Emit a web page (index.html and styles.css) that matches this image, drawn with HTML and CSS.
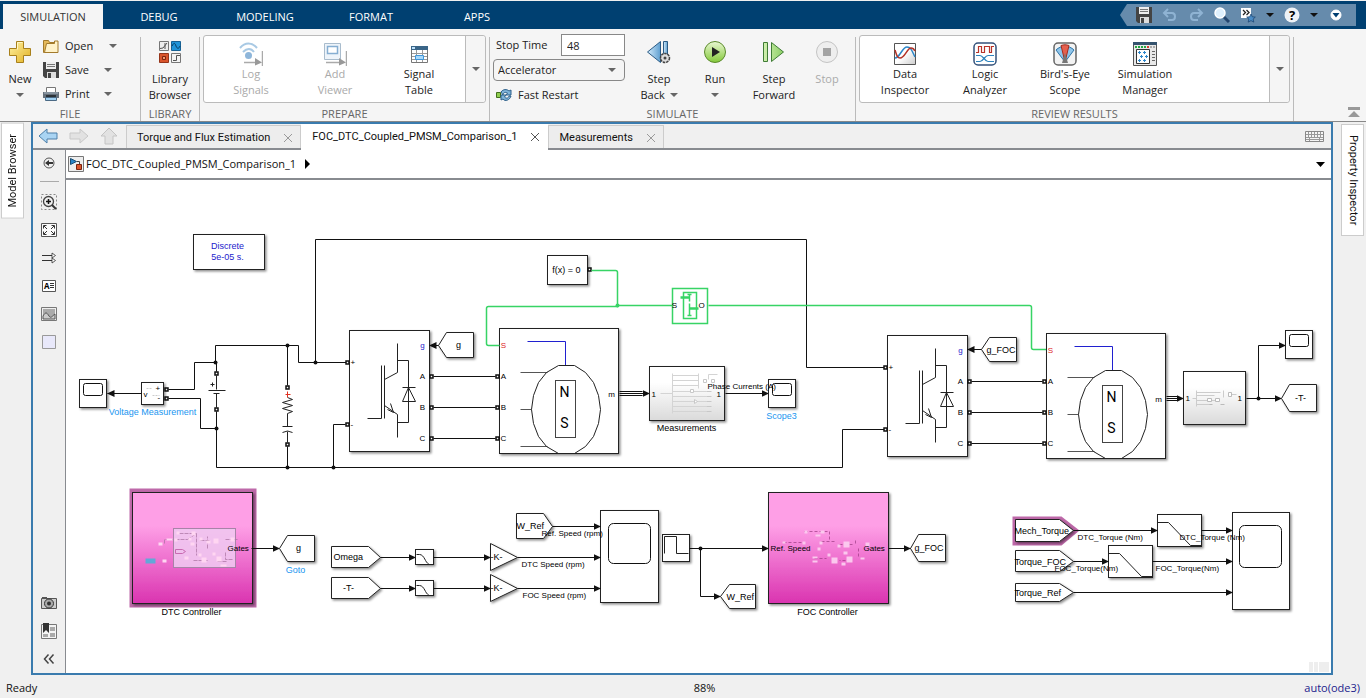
FILE: index.html
```html
<!DOCTYPE html>
<html lang="en">
<head>
    <meta charset="UTF-8">
    <meta name="viewport" content="width=device-width, initial-scale=1.0">
    <title>FOC_DTC_Coupled_PMSM_Comparison_1 - Simulink</title>
    <link rel="stylesheet" href="styles.css">
</head>
<body>
    <!-- Toolstrip tabs -->
    <header class="tabbar">
        <nav class="tabs">
            <button class="tab active">SIMULATION</button>
            <button class="tab">DEBUG</button>
            <button class="tab">MODELING</button>
            <button class="tab">FORMAT</button>
            <button class="tab">APPS</button>
        </nav>
        <div class="quick-access">
            <button class="quick" aria-label="Save"><svg width="16" height="16"><path d="M0 0h16v16H2l-2-2z" fill="#444"/><path d="M3 0h10v7H3z" fill="#eee"/><path d="M4 2.500h8M4 4.500h8" stroke="#777"/><path d="M4 10h9v6H4z" fill="#ddd"/><path d="M5 11h3v5H5z" fill="#444"/></svg></button>
            <button class="quick" aria-label="Undo"><svg width="16" height="16"><path d="M6 2L2 6l4 4M2.500 6H10c4 0 4 7 0 7H6" fill="none" stroke="#8fb3d3" stroke-width="2"/></svg></button>
            <button class="quick" aria-label="Redo"><svg width="16" height="16"><path d="M10 2l4 4-4 4M13.500 6H6c-4 0-4 7 0 7h4" fill="none" stroke="#8fb3d3" stroke-width="2"/></svg></button>
            <button class="quick" aria-label="Search"><svg width="16" height="16"><path d="M9 9l6 6" stroke="#24466e" stroke-width="3"/><circle cx="6" cy="6" r="5" fill="#dff0fd" stroke="#fff" stroke-width="1.500"/></svg></button>
            <button class="quick" aria-label="Favorites"><svg width="16" height="16"><path d="M1 1h10v10H1z" fill="#fff"/><path d="M3 3l2.500 2.500L3 8M6.500 3L9 5.500 6.500 8" fill="none" stroke="#222" stroke-width="1.300"/><path d="M11 7l1.300 2.800 3 .300-2.200 2 .700 3L11 13.600 8.200 15.100l.700-3-2.200-2 3-.300z" fill="#4a8cc6" stroke="#173f6b" stroke-width=".700"/></svg></button>
            <svg class="caret dark" width="8" height="4"><path d="M0 0h8L4 4z"/></svg>
            <button class="quick" aria-label="Help"><svg width="16" height="16"><circle cx="8" cy="8" r="7.500" fill="#eef2f6"/><text class="help-mark" x="8" y="13" text-anchor="middle">?</text></svg></button>
            <svg class="caret dark" width="8" height="4"><path d="M0 0h8L4 4z"/></svg>
            <button class="quick" aria-label="Options"><svg width="16" height="16"><circle cx="8" cy="8" r="5" fill="#fff" stroke="#fff"/><path d="M4.500 6h7L8 10.500z" fill="#003f72"/></svg></button>
        </div>
    </header>

    <!-- Ribbon -->
    <section class="ribbon">
        <div class="group file">
            <div class="group-body">
                <button class="big new"><svg width="24" height="24"><path d="M8.500 1.500h7v7h7v7h-7v7h-7v-7h-7v-7h7z" fill="url(#gold)" stroke="#a8801c"/><path d="M9.500 9.500v-7h5" fill="none" stroke="#fff7c4"/></svg><span>New</span><svg class="caret" width="8" height="4"><path d="M0 0h8L4 4z"/></svg></button>
                <div class="rows">
                    <div class="row wide"><button class="small"><svg width="16" height="16"><path d="M.500 2.500h5l1 2h7v10H.500z" fill="#e5b95a" stroke="#a37a2b"/><path d="M3.500 5.500h8V3h3.500v11.500H1.500z" fill="#fff2c9" stroke="#a37a2b"/></svg>Open</button><svg class="caret" width="8" height="4"><path d="M0 0h8L4 4z"/></svg></div>
                    <div class="row"><button class="small"><svg width="16" height="16"><path d="M0 0h16v16H2l-2-2z" fill="#444"/><path d="M3 0h10v7H3z" fill="#eee"/><path d="M4 2.500h8M4 4.500h8" stroke="#777"/><path d="M4 10h9v6H4z" fill="#ddd"/><path d="M5 11h3v5H5z" fill="#444"/></svg>Save</button><svg class="caret" width="8" height="4"><path d="M0 0h8L4 4z"/></svg></div>
                    <div class="row"><button class="small"><svg width="16" height="16"><path d="M3.500 1.500h9v5h-9z" fill="#fff" stroke="#777"/><path d="M0 6h16v6H0z" fill="#65707b"/><path d="M1 7h14" stroke="#a9b6c3"/><path d="M3 9h10v2H3z" fill="#2c3338"/><path d="M2.500 11.500h11v3h-11z" fill="#9ed0f2" stroke="#4b6a85"/></svg>Print</button><svg class="caret" width="8" height="4"><path d="M0 0h8L4 4z"/></svg></div>
                </div>
            </div>
            <h2>FILE</h2>
        </div>
        <div class="separator"></div>
        <div class="group library">
            <div class="group-body">
                <button class="big"><svg width="24" height="24"><path d="M1.500 1.500h9v9h-9z" fill="#eee" stroke="#777"/><path d="M2 8.500l3-.500 4-5M7 3v6" fill="none" stroke="#555"/><path d="M13.500 1.500h9v9h-9z" fill="#1f93d8" stroke="#176194"/><path d="M14 6c2-4 3-3 4 0s3 3 4 0" fill="none" stroke="#073d63"/><path d="M1.500 13.500h9v9h-9z" fill="#d9542b" stroke="#95341a"/><path d="M4.500 16.500h3v3h-3z" fill="#f49871" stroke="#7a230c"/><path d="M13.500 13.500h9v9h-9z" fill="#f4f4f4" stroke="#777"/><path d="M15 20.500h3.500v-5H22" fill="none" stroke="#555"/></svg><span>Library<br>Browser</span></button>
            </div>
            <h2>LIBRARY</h2>
        </div>
        <div class="separator"></div>
        <div class="group prepare">
            <div class="gallery">
                <button class="item" disabled><svg width="24" height="24"><path d="M1 6c5-6 12-6 17 0M4 10c4-4 8-4 11 0" fill="none" stroke="#a8c9e4" stroke-width="2"/><circle cx="9.500" cy="13.500" r="3.500" fill="#8eb6da"/><path d="M5 20.500h14M23.500 9v15" stroke="#aaa" stroke-width="1.500"/><path d="M16 16l7 4.500-7 3z" fill="#999"/></svg><span>Log<br>Signals</span></button>
                <button class="item" disabled><svg width="24" height="24"><path d="M1.500 1.500h16v16h-16z" fill="#eef4fa" stroke="#a9bccd"/><path d="M4.500 4.500h10v7h-10z" fill="#fff" stroke="#86aed2" stroke-width="1.500"/><path d="M3 20.500h16M23.500 9v15" stroke="#aaa" stroke-width="1.500"/><path d="M16 16l7 4.500-7 3z" fill="#999"/></svg><span>Add<br>Viewer</span></button>
                <button class="item"><svg width="24" height="24"><path d="M4.500 4.500h16v16h-16z" fill="#fff" stroke="#777"/><path d="M4 4h17v4H4z" fill="#3a6588"/><path d="M5 5h3v2H5z" fill="#bde0fa"/><path d="M5 11.500h15M5 14.500h15M5 17.500h15M9.500 8v12M15.500 8v12" stroke="#999"/><path d="M8.500 13.500h8v4h-8z" fill="#a9d9fb" stroke="#3f97db"/></svg><span>Signal<br>Table</span></button>
                <button class="more" aria-label="More"><svg class="caret" width="8" height="4"><path d="M0 0h8L4 4z"/></svg></button>
            </div>
            <h2>PREPARE</h2>
        </div>
        <div class="separator"></div>
        <div class="group simulate">
            <div class="group-body">
                <div class="sim-options">
                    <div class="stop"><label for="stop-time">Stop Time</label><input type="text" id="stop-time" value="48"></div>
                    <div class="mode"><select aria-label="Simulation mode"><option>Accelerator</option></select><svg class="caret" width="8" height="4"><path d="M0 0h8L4 4z"/></svg></div>
                    <button class="small fast"><svg width="16" height="16"><path d="M.500 5.500h4v5h-4z" fill="#8fce4e" stroke="#426f1d"/><path d="M5 5c2-3 6-3 8-1l2-1v5H10l1.500-2C9 4.500 7 6 7 8zM15 9c-1 4-6 6-8 3l-2 1V8h5l-1.500 2c2 2 4 1 4.500-1z" fill="#7fb4da" stroke="#2d5f89"/></svg>Fast Restart</button>
                </div>
                <button class="big step-back"><svg width="24" height="24"><path d="M.500 12L13.500 1.500v21z" fill="url(#blue)" stroke="#2b5b85"/><path d="M16.500 1.500h4v14h-4z" fill="url(#blue)" stroke="#2b5b85"/><circle cx="18" cy="18" r="4.500" fill="#ddd" stroke="#444" stroke-width="1.500" stroke-dasharray="2.500 .800"/><circle cx="18" cy="18" r="1.500" fill="#444"/></svg><span>Step<br>Back <svg class="caret" width="8" height="4"><path d="M0 0h8L4 4z"/></svg></span></button>
                <button class="big run"><svg width="24" height="24"><circle cx="12" cy="12" r="10.500" fill="url(#green)" stroke="#5b8a2c"/><path d="M9 7l8 5-8 5z" fill="#222"/></svg><span>Run</span><svg class="caret" width="8" height="4"><path d="M0 0h8L4 4z"/></svg></button>
                <button class="big step-forward"><svg width="24" height="24"><path d="M1.500 2.500h4v19h-4zM9.500 2.500l12 9.500-12 9.500z" fill="url(#lime)" stroke="#3f7c35"/></svg><span>Step<br>Forward</span></button>
                <button class="big halt" disabled><svg width="24" height="24"><circle cx="12" cy="12" r="10.500" fill="#eee" stroke="#c4c4c4"/><path d="M8 8h8v8H8z" fill="#a3a3a3"/></svg><span>Stop</span></button>
            </div>
            <h2>SIMULATE</h2>
        </div>
        <div class="separator"></div>
        <div class="group review">
            <div class="gallery">
                <button class="item"><svg width="24" height="24"><path d="M1.500 1.500h21v21h-21z" fill="url(#grey)" stroke="#555"/><path d="M2 16c5 0 7-11 12-11 4 0 5 4 8 10" fill="none" stroke="#2a86c8" stroke-width="1.500"/><path d="M2 8c2 7 3 8 5 8 5 0 7-10 11-10 2 0 3 1 4 3" fill="none" stroke="#b23227" stroke-width="1.500"/></svg><span>Data<br>Inspector</span></button>
                <button class="item"><svg width="24" height="24"><rect x="1" y="1" width="22" height="22" rx="4" fill="#fff" stroke="#34527b" stroke-width="1.500"/><path d="M3 10.500h2.500v-6h3v6h3v-6h5v6h2v-6H21" fill="none" stroke="#b8342a" stroke-width="1.200"/><path d="M3 13.500h4c3 0 5 6 8 6h6M3 19.500h4c3 0 5-6 8-6h6" fill="none" stroke="#2e83bd" stroke-width="1.200"/></svg><span>Logic<br>Analyzer</span></button>
                <button class="item"><svg width="24" height="24"><rect x="1" y="1" width="22" height="22" rx="4" fill="#f3f3f3" stroke="#666" stroke-width="1.500"/><path d="M12 20L3 8c5-5 13-5 18 0z" fill="#8fc5ea" stroke="#2f75a8"/><path d="M12 20L8 3.500c3-1 5-1 8 0z" fill="#e5604e" stroke="#a12c1f"/><path d="M9 21l3-10 3 10z" fill="#777"/></svg><span>Bird's-Eye<br>Scope</span></button>
                <button class="item"><svg width="24" height="24"><path d="M.500 .500h23v23H.500z" fill="#e9e9e9" stroke="#555"/><path d="M0 0h24v3H0z" fill="#35536e"/><path d="M2 5h12" stroke="#23a942" stroke-width="2" stroke-dasharray="2 1"/><path d="M14 5h2" stroke="#d43c2a" stroke-width="2"/><path d="M17 5h6" stroke="#aaa" stroke-width="2" stroke-dasharray="2 1"/><path d="M3.500 7.500h13v14h-13z" fill="#fff" stroke="#333"/><path d="M6.500 9v3M5 10.500h3M11.500 9v3M10 10.500h3M8.500 13v3M7 14.500h3M13.500 13v3M12 14.500h3M6.500 17v3M5 18.500h3M11.500 17v3M10 18.500h3" stroke="#2c86ca"/><path d="M19 9.500h3M19 12.500h3M19 15.500h3M19 18.500h3" stroke="#666"/></svg><span>Simulation<br>Manager</span></button>
                <button class="more" aria-label="More"><svg class="caret" width="8" height="4"><path d="M0 0h8L4 4z"/></svg></button>
            </div>
            <h2>REVIEW RESULTS</h2>
        </div>
        <div class="separator"></div>
        <button class="collapse" aria-label="Minimize toolstrip"><svg width="12" height="12"><path d="M0 0h12v3H0zM6 4l6 6H0z" fill="#999"/></svg></button>
    </section>

    <main class="workspace">
        <aside class="dock left"><button class="dock-tab">Model Browser</button></aside>

        <section class="editor">
            <div class="doc-tabs">
                <div class="history">
                    <button aria-label="Back"><svg width="20" height="16"><path d="M1 8l8-7v4h10v6H9v4z" fill="#a9d4f3" stroke="#4c7fa9"/></svg></button>
                    <button aria-label="Forward"><svg width="20" height="16"><path d="M19 8l-8-7v4H1v6h10v4z" fill="#e2e2e2" stroke="#c8c8c8"/></svg></button>
                    <button aria-label="Up"><svg width="18" height="18"><path d="M9 1l8 8h-4v8H5V9H1z" fill="#e2e2e2" stroke="#c4c4c4"/></svg></button>
                </div>
                <div class="doc-tab"><span>Torque and Flux Estimation</span><button aria-label="Close"><svg width="8" height="8"><path d="M0 0l8 8M8 0L0 8"/></svg></button></div>
                <div class="doc-tab current"><span>FOC_DTC_Coupled_PMSM_Comparison_1</span><button aria-label="Close"><svg width="8" height="8"><path d="M0 0l8 8M8 0L0 8"/></svg></button></div>
                <div class="doc-tab"><span>Measurements</span><button aria-label="Close"><svg width="8" height="8"><path d="M0 0l8 8M8 0L0 8"/></svg></button></div>
                <svg class="keyboard" width="19" height="11"><path d="M.500 .500h18v10H.500z" fill="#f5f5f5" stroke="#888"/><path d="M1 3.500h17M1 6.500h17M1 8.500h17" stroke="#999"/><path d="M3.500 1v5M6.500 1v5M9.500 1v5M12.500 1v5M15.500 1v5M4.500 6v4M14.500 6v4" stroke="#999"/></svg>
            </div>
            <div class="editor-body">
                <div class="palette">
                    <button aria-label="Hide browser"><svg width="12" height="12"><circle cx="6" cy="6" r="5" fill="none" stroke="#555"/><path d="M2 6l4-3v2h4v2H6v2z" fill="#333"/></svg></button>
                    <hr>
                    <button aria-label="Zoom"><svg width="16" height="16"><path d="M.500 .500h15v15H.500z" fill="none" stroke="#888" stroke-dasharray="2 2"/><circle cx="7.500" cy="7.500" r="5" fill="#eee" stroke="#444" stroke-width="1.300"/><path d="M5 7.500h5M7.500 5v5" stroke="#111" stroke-width="1.500"/><path d="M11 11l4 4" stroke="#333" stroke-width="2"/></svg></button>
                    <button aria-label="Fit to view"><svg width="16" height="16"><path d="M.500 1.500h15v13H.500z" fill="#fafafa" stroke="#555"/><path d="M2.500 6.500v-3h3M10.500 3.500h3v3M13.500 9.500v3h-3M5.500 12.500h-3v-3M3 4l3 3M13 4l-3 3M13 12l-3-3M3 12l3-3" fill="none" stroke="#333"/></svg></button>
                    <button aria-label="Signals"><svg width="16" height="16"><path d="M1 5.500h11M1 10.500h11" stroke="#333"/><path d="M11 3l3.500 2.500L11 8zM11 8l3.500 2.500L11 13z" fill="#fff" stroke="#333" stroke-width=".800"/></svg></button>
                    <button aria-label="Annotation"><svg width="16" height="16"><path d="M1.500 2.500h13v11h-13z" fill="#fff" stroke="#555"/><text class="a-mark" x="3" y="11">A</text><path d="M9 5.500h4M9 7.500h4M9 9.500h4" stroke="#333"/></svg></button>
                    <button aria-label="Image"><svg width="16" height="16"><path d="M.500 1.500h15v13H.500z" fill="#eee" stroke="#777"/><path d="M2 3h12v10H2z" fill="#aaa"/><path d="M2 10c3-5 4-3 6 0s3 0 6-2v5H2z" fill="#ccc" stroke="#555"/></svg></button>
                    <button aria-label="Area"><svg width="16" height="16"><path d="M1.500 1.500h13v13h-13z" fill="#e8e8fa" stroke="#999"/></svg></button>
                    <div class="spacer"></div>
                    <button aria-label="Screenshot"><svg width="16" height="16"><path d="M.500 3.500h15v10H.500z" fill="#ccc" stroke="#555"/><path d="M1 2h5v2H1z" fill="#555"/><circle cx="8" cy="8.500" r="4.500" fill="#aaa" stroke="#333"/><circle cx="8" cy="8.500" r="2" fill="#333"/></svg></button>
                    <button aria-label="Bookmarks"><svg width="16" height="16"><path d="M.500 1.500h15v14H.500z" fill="#f4f4f4" stroke="#777"/><path d="M9 4h5v4H9zM9 10h5v4H9zM2 11h5v3H2z" fill="#aaa"/><path d="M2 0h6v10L5 7l-3 3z" fill="#333"/></svg></button>
                    <button aria-label="Collapse"><svg width="16" height="16"><path d="M7.500 3.500l-4 4.500 4 4.500M12.500 3.500l-4 4.500 4 4.500" fill="none" stroke="#444" stroke-width="1.500"/></svg></button>
                </div>
                <div class="model">
                    <div class="path">
                        <svg width="16" height="16"><path d="M.500 .500h15v15H.500z" fill="#eee" stroke="#777"/><path d="M2.500 2.500l6 3-6 3z" fill="#2a86c8" stroke="#174c73"/><path d="M9 5.500h2.500V8" fill="none" stroke="#444"/><path d="M8.500 8.500h5v5h-5z" fill="#d9542b" stroke="#7a230c"/></svg>
                        <span>FOC_DTC_Coupled_PMSM_Comparison_1</span>
                        <svg width="5" height="10"><path d="M0 0l5 5-5 5z"/></svg>
                        <button class="path-menu" aria-label="Path history"><svg width="9" height="5"><path d="M0 0h9L4.500 5z"/></svg></button>
                    </div>
                    <div class="canvas">
                        <svg class="diagram" width="1265" height="493" viewBox="65.500 179.500 1265 493">
                            <defs>
                                <linearGradient id="gold" x2="1" y2="1"><stop offset="0" stop-color="#fff3a6"/><stop offset="1" stop-color="#e2b021"/></linearGradient>
                                <linearGradient id="blue" x2="1" y2="0"><stop offset="0" stop-color="#d3ebfb"/><stop offset="1" stop-color="#5f9fd0"/></linearGradient>
                                <linearGradient id="green" x2="0" y2="1"><stop offset="0" stop-color="#e9f8d2"/><stop offset="1" stop-color="#84c93a"/></linearGradient>
                                <linearGradient id="lime" x2="1" y2="0"><stop offset="0" stop-color="#d2f0b0"/><stop offset="1" stop-color="#8ccf66"/></linearGradient>
                                <linearGradient id="grey" x2="1" y2="1"><stop offset=".5" stop-color="#fff"/><stop offset="1" stop-color="#ccc"/></linearGradient>
                                <linearGradient id="subsystem" x2="0" y2="1"><stop offset=".3" stop-color="#fff"/><stop offset="1" stop-color="#dadada"/></linearGradient>
                                <linearGradient id="pink" x2="0" y2="1"><stop offset=".3" stop-color="#fe9fe6"/><stop offset="1" stop-color="#da34b0"/></linearGradient>
                                <filter id="shadow" x="-20%" y="-20%" width="150%" height="150%"><feDropShadow dx="1.500" dy="1.500" stdDeviation="1" flood-color="#000" flood-opacity=".45"/></filter>
                                <marker id="arrow" markerUnits="userSpaceOnUse" markerWidth="8" markerHeight="8" refX="7" refY="4" orient="auto"><path d="M0 .500L7.500 4 0 7.500z" fill="#111"/></marker>
                                <rect id="port" x="-1.500" y="-1.500" width="3" height="3"/>

                                <g id="inverter">
                                    <rect class="block" x="349" y="330" width="80" height="121"/>
                                    <path class="thin" d="M397 343v29l-13 7M381 365v53M384 365v53M367 418h14M384 405l13 9v23M390 403l3 9-6-3M397 360h11v62h-11M402 387h13M408 387l-6 14h13z"/>
                                    <text class="port-label middle blue" x="423" y="348">g</text>
                                    <text class="port-label" x="351" y="365">+</text>
                                    <text class="port-label" x="351" y="427">-</text>
                                    <text class="port-label middle" x="423" y="379">A</text>
                                    <text class="port-label middle" x="423" y="410">B</text>
                                    <text class="port-label middle" x="423" y="441">C</text>
                                    <g class="port"><use href="#port" x="347" y="362"/><use href="#port" x="347" y="424"/><use href="#port" x="431" y="376"/><use href="#port" x="431" y="407"/><use href="#port" x="431" y="438"/></g>
                                </g>
                                <g id="motor">
                                    <rect class="block" x="499" y="328" width="119" height="125"/>
                                    <path d="M527 341h38v24" fill="none" stroke="#2020d0"/>
                                    <path d="M520 372h27M520 409h11M520 446h27" stroke="#555"/>
                                    <path class="thin" d="M558 365h16l11 7 8 10 5 13 2 14-2 14-5 13-8 10-11 7h-16l-12-7-8-10-5-13-2-14 2-14 5-13 8-10z"/>
                                    <rect x="555" y="380" width="20" height="57" fill="#fff" stroke="#444"/>
                                    <text class="pole" x="565" y="397">N</text>
                                    <text class="pole" x="565" y="428">S</text>
                                    <text class="port-label middle red" x="504" y="348">S</text>
                                    <text class="port-label middle" x="504" y="379">A</text>
                                    <text class="port-label middle" x="504" y="410">B</text>
                                    <text class="port-label middle" x="504" y="441">C</text>
                                    <text class="port-label middle" x="612" y="397">m</text>
                                    <g class="port"><use href="#port" x="497" y="376"/><use href="#port" x="497" y="407"/><use href="#port" x="497" y="438"/></g>
                                </g>
                                <g id="scope">
                                    <rect class="block" width="27" height="28"/>
                                    <rect class="screen" x="4" y="4" width="19" height="12" rx="2"/>
                                </g>
                                <g id="filter-block">
                                    <rect class="block" width="18" height="15"/>
                                    <path class="thin" d="M1 5h3c5 0 6 9 9 9"/>
                                </g>
                                <g id="torque-filter">
                                    <rect class="block" width="44" height="32"/>
                                    <path class="thin" d="M0 8h11l22 23h11"/>
                                </g>
                            </defs>

                            <!-- DC bus -->
                            <path class="wire" d="M215 362v-17h83v17h48M315 362V239h491v128h80M168 389h26v-27h22v9M168 398h32v30h16M216 411v56h626v-38h44M333 467v-43h12M287 345v40M287 446v21"/>
                            <g class="dot"><circle cx="215" cy="362" r="2"/><circle cx="216" cy="428" r="2"/><circle cx="287" cy="345" r="2"/><circle cx="315" cy="362" r="2"/><circle cx="287" cy="467" r="2"/><circle cx="333" cy="467" r="2"/></g>
                            <path class="thin" d="M216 375v14M208 390h17M213 393h6M216 393v14M210 384h4M212 382v4M287 397l5 2-10 3 10 3-10 3 10 3-5 2v13M282 426h10M282 432q5-3 10 0M287 431v11"/>
                            <path d="M285 394h5M287 391v6" stroke="#e03020"/>
                            <g class="port"><use href="#port" x="216" y="373"/><use href="#port" x="216" y="409"/><use href="#port" x="287" y="387"/><use href="#port" x="287" y="444"/><use href="#port" x="166" y="389"/><use href="#port" x="166" y="398"/></g>

                            <rect class="block" x="193" y="234" width="71" height="35"/>
                            <text class="name middle blue" x="228" y="249">Discrete</text>
                            <text class="name middle blue" x="228" y="260">5e-05 s.</text>

                            <use href="#scope" x="79" y="379"/>
                            <rect class="block" x="141" y="382" width="22" height="22"/>
                            <path d="M146 388h6M152 395h7" stroke="#ccc" stroke-dasharray="2 1"/>
                            <text class="port-label" x="144" y="397">v</text>
                            <text class="port-label" x="156" y="391">+</text>
                            <text class="port-label" x="158" y="400">-</text>
                            <path class="wire arrow" d="M141 393h-34"/>
                            <text class="name middle sky" x="153" y="415">Voltage Measurement</text>

                            <!-- DTC drive -->
                            <use href="#inverter"/>
                            <use href="#motor"/>
                            <path class="wire" d="M433 376h62M433 407h62M433 438h62"/>
                            <path class="block" d="M438 345l8-13h27v25h-27z"/>
                            <text class="name middle" x="459" y="348">g</text>
                            <path class="wire arrow" d="M438 345h-9"/>
                            <rect class="block" x="547" y="255" width="40" height="29"/>
                            <text class="name middle" x="567" y="273">f(x) = 0</text>
                            <g class="port"><use href="#port" x="589" y="269"/></g>

                            <path class="wire" d="M619 391h23M619 393h23M619 395h23"/>
                            <path class="wire arrow" d="M640 393h9"/>
                            <rect class="block" x="649" y="366" width="75" height="54" fill="url(#subsystem)"/>
                            <path d="M660 393h12M672 373v40M672 375h26M672 380h26M672 385h26M698 373v15M672 391h34M672 396h34M672 401h34M672 406h34M672 411h34M708 379v-5h9" fill="none" stroke="#d4d4d4"/>
                            <path d="M703 379h3v3h-3zM711 379h3v3h-3zM706 391h5M706 396h5M706 401h5M706 406h5M706 411h5M690 389h3v3h-3zM694 399l3 2-3 2z" fill="#fff" stroke="#c8c8c8"/>
                            <text class="port-label" x="652" y="397">1</text>
                            <text class="port-label" x="717" y="397">1</text>
                            <path class="wire arrow" d="M725 393h43"/>
                            <use href="#scope" x="768" y="379"/>
                            <text class="signal" x="708" y="389">Phase Currents (A)</text>
                            <text class="name middle" x="687" y="431">Measurements</text>
                            <text class="name middle sky" x="782" y="419">Scope3</text>

                            <!-- Mechanical link -->
                            <path class="shaft" d="M591 270h24q2 0 2 2v34H488q-2 0-2 2v35q0 2 2 2h11M617 305h55M708 305h321q2 0 2 2v40q0 2 2 2h13"/>
                            <circle cx="617" cy="305" r="2" fill="#37d465"/>
                            <path d="M672 288h35v35h-35zM683 292h13v26h-13zM689 294v7M687 294h4M689 303v12M687 315h4" fill="none" stroke="#37d465" stroke-width="1.500"/>
                            <path d="M680 297h9M689 308h9" stroke="#37d465" stroke-width="2.500"/>
                            <text class="port-label middle" x="675" y="308">S</text>
                            <text class="port-label middle" x="702" y="308">O</text>

                            <!-- FOC drive -->
                            <use href="#inverter" x="538" y="5"/>
                            <use href="#motor" x="547" y="5"/>
                            <path class="wire" d="M971 381h71M971 412h71M971 443h71"/>
                            <path class="block" d="M981 349l8-12h27v24h-27z"/>
                            <text class="name" x="987" y="353">g_FOC</text>
                            <path class="wire arrow" d="M981 349h-14"/>
                            <path class="wire" d="M1166 396h11M1166 398h11M1166 400h11"/>
                            <path class="wire arrow" d="M1174 398h9"/>
                            <rect class="block" x="1183" y="371" width="62" height="53" fill="url(#subsystem)"/>
                            <path d="M1192 398h4M1196 390v16M1196 392h24M1196 395h18M1196 400h22M1196 404h14M1223 390v7M1228 394h8" fill="none" stroke="#ccc"/>
                            <path d="M1207 398h4v3h-4zM1228 392h3v4h-3zM1215 398h4v3h-4zM1209 404h3M1220 404h4" fill="#fff" stroke="#bbb"/>
                            <text class="port-label" x="1186" y="401">1</text>
                            <text class="port-label" x="1238" y="401">1</text>
                            <path class="wire arrow" d="M1246 398h35"/>
                            <path class="wire arrow" d="M1258 398v-53h27"/>
                            <g class="dot"><circle cx="1258" cy="398" r="2"/></g>
                            <use href="#scope" x="1285" y="330"/>
                            <path class="block" d="M1281 398l8-14h27v27h-27z"/>
                            <text class="name middle" x="1301" y="401">-T-</text>

                            <!-- DTC controller -->
                            <rect x="129" y="488" width="127" height="119" fill="#be69a9"/>
                            <rect class="block" x="132" y="492" width="120" height="111" fill="url(#pink)"/>
                            <rect x="173" y="528" width="62" height="39" fill="#efc6f0" fill-opacity=".9" stroke="#a883a8"/>
                            <path d="M179 533h16M196 533v22M175 539h12M187 539l9-6M200 540h10M207 548v-12M225 539h12M193 560h14M217 561h10M164 543v-4h8M225 552v7h7" fill="none" stroke="#a8709f" stroke-width=".700" stroke-dasharray="4 1"/>
                            <path d="M176 531h3v3h-3zM174 538h3v3h-3zM188 537h3v3h-3zM191 531h4v4h-4zM190 542h4v3h-4zM199 537h3v3h-3zM206 540h4v3h-4zM213 538h5v5h-5zM230 537h4v4h-4zM198 553h3v3h-3zM201 557h5v5h-5zM212 552h3v3h-3zM216 556h5v5h-5zM184 556h4v3h-4zM220 564h6v2h-6zM162 559h4v3h-4zM158 542h4v3h-4zM166 538h6v2h-6z" fill="#ffd6f2"/>
                            <path d="M175 549h7l3 2-3 2h-7z" fill="none" stroke="#c86ab1"/>
                            <path d="M145 558h10v5h-10z" fill="#62a8d8"/>
                            <text class="port-label" x="228" y="551">Gates</text>
                            <path class="wire arrow" d="M251 548h28"/>
                            <path class="block" d="M279 548l8-13h27v26h-27z"/>
                            <text class="name middle" x="299" y="551">g</text>
                            <text class="name middle sky" x="296" y="573">Goto</text>
                            <text class="name middle" x="192" y="615">DTC Controller</text>

                            <!-- Speed scope -->
                            <path class="block" d="M331 546h37l12 11-12 10h-37z"/>
                            <path class="block" d="M331 577h37l12 11-12 10h-37z"/>
                            <text class="name" x="334" y="560">Omega</text>
                            <text class="name middle" x="349" y="591">-T-</text>
                            <path class="wire arrow" d="M380 557h35"/>
                            <path class="wire arrow" d="M380 588h35"/>
                            <use href="#filter-block" x="415" y="549"/>
                            <use href="#filter-block" x="415" y="580"/>
                            <path class="wire arrow" d="M433 557h57"/>
                            <path class="wire arrow" d="M433 588h57"/>
                            <path class="block" d="M490 543l27 14-27 13z"/>
                            <path class="block" d="M490 574l27 14-27 13z"/>
                            <text class="name" x="491" y="560">-K-</text>
                            <text class="name" x="491" y="591">-K-</text>
                            <path class="block" d="M516 513h27l9 13-9 12h-27z"/>
                            <text class="name" x="517" y="529">W_Ref</text>
                            <rect class="block" x="600" y="510" width="58" height="92"/>
                            <rect class="screen" x="608" y="523" width="42" height="40" rx="5"/>
                            <path class="wire arrow" d="M552 526h48"/>
                            <path class="wire arrow" d="M517 557h83"/>
                            <path class="wire arrow" d="M517 588h83"/>
                            <text class="signal" x="542" y="536">Ref. Speed (rpm)</text>
                            <text class="signal" x="522" y="567">DTC Speed (rpm)</text>
                            <text class="signal" x="523" y="598">FOC Speed (rpm)</text>

                            <!-- FOC controller -->
                            <rect class="block" x="662" y="534" width="27" height="27"/>
                            <path class="thin" d="M664 553v-17h12v17h12"/>
                            <rect class="block" x="768" y="492" width="120" height="111" fill="url(#pink)"/>
                            <path d="M804 531h25M829 531v10M783 542h20M821 541h14M814 558h12M839 544h15M858 548v10M845 560h-6M855 543v-4" fill="none" stroke="#9c3b83" stroke-width=".700" stroke-dasharray="3 2"/>
                            <path d="M804 530h3v3h-3zM820 530h4v3h-4zM815 534h5v2h-5zM802 541h3v3h-3zM819 541h3v3h-3zM843 541h6v6h-6zM865 542h4v4h-4zM837 544h3v3h-3zM817 547h3v3h-3zM812 556h5v2h-5zM812 560h5v2h-5zM831 557h6v6h-6zM846 556h6v6h-6zM843 551h4v3h-4zM860 557h4v2h-4zM841 562h4v3h-4zM827 553h3v3h-3zM782 541h3v2h-3z" fill="#fbc8ee"/>
                            <path class="wire arrow" d="M689 548h79"/>
                            <path class="wire arrow" d="M700 548v48h20"/>
                            <g class="dot"><circle cx="700" cy="548" r="2"/></g>
                            <path class="block" d="M720 596l9-12h26v24h-26z"/>
                            <text class="name" x="727" y="600">W_Ref</text>
                            <text class="port-label" x="771" y="551">Ref. Speed</text>
                            <text class="port-label" x="864" y="551">Gates</text>
                            <text class="name middle" x="828" y="615">FOC Controller</text>
                            <path class="block" d="M910 548l8-14h27v27h-27z"/>
                            <path class="wire arrow" d="M888 548h22"/>
                            <text class="name" x="915" y="551">g_FOC</text>

                            <!-- Torque scope -->
                            <path d="M1012 516h49l18 14-18 15h-49z" fill="#be69a9"/>
                            <path class="block" d="M1015 519h44l14 11-14 11h-44z"/>
                            <path class="block" d="M1015 550h44l14 11-14 10h-44z"/>
                            <path class="block" d="M1015 583h44l14 9-14 9h-44z"/>
                            <use href="#torque-filter" x="1157" y="514"/>
                            <use href="#torque-filter" x="1108" y="545"/>
                            <rect class="block" x="1232" y="512" width="57" height="97"/>
                            <rect class="screen" x="1239" y="525" width="42" height="42" rx="5"/>
                            <text class="name" x="1015" y="534">Mech_Torque</text>
                            <text class="name" x="1015" y="565">Torque_FOC</text>
                            <text class="name" x="1015" y="596">Torque_Ref</text>
                            <path class="wire arrow" d="M1073 530h84"/>
                            <path class="wire arrow" d="M1201 530h31"/>
                            <path class="wire arrow" d="M1073 561h35"/>
                            <path class="wire arrow" d="M1152 561h80"/>
                            <path class="wire arrow" d="M1073 592h159"/>
                            <text class="signal" x="1078" y="540">DTC_Torque (Nm)</text>
                            <text class="signal" x="1180" y="540">DTC_Torque (Nm)</text>
                            <text class="signal" x="1055" y="571">FOC_Torque(Nm)</text>
                            <text class="signal" x="1156" y="571">FOC_Torque(Nm)</text>
                        </svg>
                        <div class="grip"><i></i><i></i><i></i></div>
                    </div>
                </div>
            </div>
        </section>

        <aside class="dock right"><button class="dock-tab">Property Inspector</button></aside>
    </main>

    <footer class="status">
        <span>Ready</span>
        <span>88%</span>
        <a href="#solver">auto(ode3)</a>
    </footer>
</body>
</html>
```
FILE: styles.css
```css
* {
    box-sizing: border-box;
}
body {
    margin: 0;
    height: 100vh;
    display: flex;
    flex-direction: column;
    overflow: hidden;
    background-color: #f0f0f0;
    color: #222;
    font-family: "Open Sans", "Noto Sans", sans-serif;
    font-size: 11px;
    line-height: 16px;
}
button {
    margin: 0;
    padding: 0;
    border: none;
    background: none;
    color: inherit;
    font: inherit;
}
svg {
    display: block;
    flex: none;
}
.caret {
    fill: #666;
}
.caret.dark {
    fill: #111;
}

/* Toolstrip tabs */
.tabbar {
    display: flex;
    justify-content: space-between;
    height: 29px;
    flex: none;
    padding: 3px 10px 0 3px;
    border-top: 1px solid #f0f0f0;
    background-color: #004071;
}
.tabs {
    display: flex;
    gap: 6px;
}
.tab {
    width: 100px;
    color: #fff;
}
.tab.active {
    background-color: #f5f5f5;
    color: #333;
}
.quick-access {
    display: flex;
    align-items: center;
    gap: 10px;
    height: 22px;
    padding: 0 12px 0 16px;
    background-color: #668bac;
    clip-path: polygon(7px 0, 100% 0, 100% 100%, 7px 100%, 0 50%);
}
.help-mark {
    font-size: 13px;
    font-weight: bold;
}

/* Ribbon */
.ribbon {
    display: flex;
    height: 93px;
    flex: none;
    background-color: #f5f5f5;
    border-bottom: 1px solid #888;
}
.separator {
    width: 1px;
    margin-top: 8px;
    background-color: #bbb;
}
.group {
    display: flex;
    flex-direction: column;
    justify-content: space-between;
}
.group h2 {
    margin: 0;
    color: #666;
    font-size: 11px;
    font-weight: normal;
    line-height: 14px;
    text-align: center;
}
.group-body {
    display: flex;
}
.file {
    width: 140px;
}
.library {
    width: 58px;
}
.prepare {
    width: 289px;
}
.simulate {
    width: 365px;
}
.review {
    width: 437px;
}
.big {
    display: flex;
    flex-direction: column;
    align-items: center;
    padding-top: 11px;
}
.big span {
    margin-top: 7px;
}
.big > .caret {
    margin-top: 6px;
}
.big span .caret {
    display: inline-block;
    margin: 0 0 2px 2px;
}
.new {
    width: 40px;
}
.library .big {
    width: 58px;
}
.rows {
    padding: 5px 0 0 3px;
}
.row {
    display: flex;
    align-items: center;
    width: 69px;
    height: 24px;
    justify-content: space-between;
}
.row.wide {
    width: 74px;
}
.small {
    display: flex;
    align-items: center;
    gap: 6px;
}
.gallery {
    display: flex;
    height: 68px;
    margin: 6px 3px 0;
    padding-left: 5px;
    border: 1px solid #bbb;
    border-radius: 3px;
    background-color: #fff;
}
.item {
    display: flex;
    flex-direction: column;
    align-items: center;
    width: 84px;
    padding-top: 6px;
}
.review .item {
    width: 80px;
}
.more {
    width: 20px;
    margin-left: auto;
    border-left: 1px solid #bbb;
    background-color: #f5f5f5;
    border-radius: 0 3px 3px 0;
}
.more .caret {
    margin: 0 auto;
}
button:disabled {
    color: #aaa;
}
.sim-options {
    display: flex;
    flex-direction: column;
    gap: 3px;
    width: 135px;
    padding: 5px 0 0 3px;
}
.stop {
    display: flex;
    justify-content: space-between;
    align-items: center;
    padding-left: 3px;
}
.stop input {
    width: 64px;
    height: 22px;
    padding: 0 5px;
    border: 1px solid #888;
    background-color: #fff;
    color: #222;
    font: inherit;
}
.mode {
    position: relative;
}
.mode select {
    display: block;
    width: 100%;
    height: 22px;
    padding: 0 4px;
    border: 1px solid #888;
    border-radius: 4px;
    appearance: none;
    background-color: #f5f5f5;
    color: #222;
    font: inherit;
}
.mode .caret {
    position: absolute;
    right: 9px;
    top: 9px;
    pointer-events: none;
}
.fast {
    height: 22px;
    padding-left: 3px;
}
.step-back {
    width: 68px;
}
.run {
    width: 44px;
}
.step-forward {
    width: 74px;
}
.halt {
    width: 32px;
}
.collapse {
    margin: auto 6px 2px auto;
}

/* Workspace */
.workspace {
    display: flex;
    flex: 1;
    min-height: 0;
}
.dock {
    width: 31px;
    flex: none;
    padding: 1px 0 0 1px;
}
.dock.right {
    width: 33px;
    padding: 2px 0 0 8px;
}
.dock-tab {
    width: 23px;
    padding: 10px 2px;
    border: 1px solid #ccc;
    background-color: #fff;
    color: #111;
    font-family: Roboto, "Open Sans", sans-serif;
    writing-mode: vertical-rl;
}
.left .dock-tab {
    transform: rotate(180deg);
}
.editor {
    display: flex;
    flex-direction: column;
    flex: 1;
    min-width: 0;
    border: 2px solid #3a7bae;
    color: #111;
}
.doc-tabs {
    display: flex;
    align-items: flex-end;
    height: 26px;
    padding-right: 7px;
    border-bottom: 2px solid #888b90;
}
.history {
    display: flex;
    align-items: center;
    align-self: center;
    gap: 11px;
    width: 93px;
    padding-left: 5px;
}
.doc-tab {
    display: flex;
    align-items: center;
    gap: 14px;
    height: 23px;
    padding: 1px 8px 0 10px;
    border: 1px solid #ccc;
    border-bottom: none;
    background-color: #ededed;
    font-family: Roboto, "Open Sans", sans-serif;
}
.doc-tab.current {
    height: 26px;
    margin-bottom: -2px;
    padding-bottom: 2px;
    border-color: #fff;
    background-color: #fff;
}
.doc-tab svg {
    stroke: #999;
    fill: none;
}
.doc-tab.current svg {
    stroke: #555;
}
.keyboard {
    margin: 0 0 6px auto;
}
.editor-body {
    display: flex;
    flex: 1;
    min-height: 0;
}
.palette {
    display: flex;
    flex-direction: column;
    align-items: center;
    gap: 12px;
    width: 33px;
    flex: none;
    padding: 7px 0 6px;
    border-right: 1px solid #888b90;
}
.palette hr {
    width: 19px;
    margin: 0;
    border: none;
    border-top: 1px solid #aaa;
}
.a-mark {
    font-size: 8px;
    font-weight: bold;
}
.spacer {
    flex: 1;
}
.model {
    display: flex;
    flex-direction: column;
    flex: 1;
    min-width: 0;
}
.path {
    display: flex;
    align-items: center;
    gap: 2px;
    height: 30px;
    flex: none;
    padding: 0 6px 0 2px;
    border-bottom: 2px solid #888b90;
    background-color: #fff;
}
.path span {
    margin-right: 7px;
}
.path-menu {
    margin-left: auto;
}
.canvas {
    position: relative;
    flex: 1;
    min-height: 0;
    overflow: hidden;
    background-color: #fff;
}
.grip {
    position: absolute;
    right: 2px;
    bottom: 1px;
    display: flex;
    gap: 1px;
}
.grip i {
    width: 4px;
    height: 10px;
    background-color: #eee;
}
.grip i:last-child {
    width: 10px;
}

/* Diagram */
.diagram {
    font-family: "Liberation Sans", Arial, sans-serif;
}
.diagram text {
    translate: -1px -1px;
}
.block {
    stroke: #222;
    filter: url(#shadow);
}
.block:not([fill]) {
    fill: #fff;
}
.thin {
    fill: none;
    stroke: #222;
}
.screen {
    fill: #fff;
    stroke: #111;
}
.wire {
    fill: none;
    stroke: #111;
}
.arrow {
    marker-end: url(#arrow);
}
.dot {
    fill: #111;
}
.port {
    fill: #fff;
    stroke: #111;
    stroke-width: 1.5;
}
.shaft {
    fill: none;
    stroke: #37d465;
    stroke-width: 1.5;
}
.name {
    font-size: 9px;
}
.signal,
.port-label {
    font-size: 8px;
}
.pole {
    font-family: Roboto, sans-serif;
    font-size: 14px;
    text-anchor: middle;
}
.middle {
    text-anchor: middle;
}
.blue {
    fill: #2222cc;
}
.red {
    fill: #dd2222;
}
.sky {
    fill: #1a96f0;
}

/* Status bar */
.status {
    display: grid;
    grid-template-columns: 16fr auto 15fr;
    height: 23px;
    flex: none;
    padding: 5px 6px 2px;
    color: #111;
}
.status a {
    color: #1c1c8c;
    text-align: right;
    text-decoration: none;
}
```
